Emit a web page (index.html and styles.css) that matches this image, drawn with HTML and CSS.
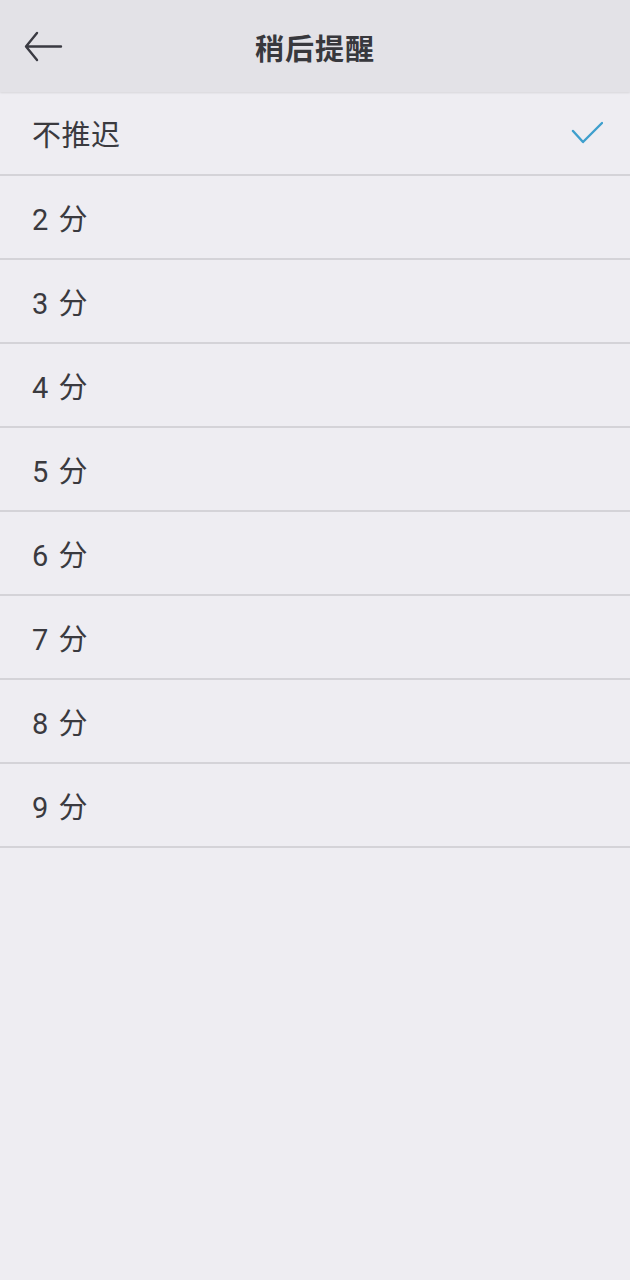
FILE: index.html
```html
<!DOCTYPE html>
<html lang="zh">
<head>
<meta charset="utf-8">
<link rel="stylesheet" href="styles.css">
</head>
<body>
<div class="app">
  <header class="bar">
    <svg class="back" width="40" height="32" viewBox="0 0 40 32">
      <path d="M37 15.5H3M13 2L2 15.5L13 29" fill="none" stroke="#3a3a42" stroke-width="2.4" stroke-linecap="round" stroke-linejoin="round"/>
    </svg>
    <h1 class="title">稍后提醒</h1>
  </header>
  <ul class="list">
    <li class="row"><span>不推迟</span>
      <svg class="check" width="32" height="24" viewBox="0 0 32 24"><path d="M2 10L12 21L31 2" fill="none" stroke="#3e9fcd" stroke-width="2.4" stroke-linecap="round" stroke-linejoin="round"/></svg>
    </li>
    <li class="row"><span>2 分</span></li>
    <li class="row"><span>3 分</span></li>
    <li class="row"><span>4 分</span></li>
    <li class="row"><span>5 分</span></li>
    <li class="row"><span>6 分</span></li>
    <li class="row"><span>7 分</span></li>
    <li class="row"><span>8 分</span></li>
    <li class="row"><span>9 分</span></li>
  </ul>
</div>
</body>
</html>
```

FILE: styles.css
```css
html, body {
  margin: 0;
  padding: 0;
  background: #eeedf2;
}
body {
  font-family: Roboto, "Noto Sans CJK SC", sans-serif;
  color: #3a3a3f;
}
.app {
  width: 630px;
  min-height: 1280px;
  background: #eeedf2;
}
.bar {
  height: 92px;
  background: #e3e2e7;
  display: flex;
  align-items: center;
  justify-content: center;
  position: relative;
  box-shadow: 0 1px 2px rgba(0,0,0,0.10);
}
.back {
  position: absolute;
  left: 24px;
  top: 31px;
}
.title {
  margin: 0;
  font-size: 29px;
  font-weight: 700;
  color: #38383d;
  letter-spacing: 1px;
  padding-top: 2px;
}
.list {
  list-style: none;
  margin: 0;
  padding: 0;
}
.row {
  height: 82px;
  border-bottom: 2px solid #d4d3d8;
  display: flex;
  align-items: center;
  justify-content: space-between;
  padding: 0 27px 0 32px;
  font-size: 29px;
  letter-spacing: 0.5px;
  word-spacing: 2px;
}
.row span {
  margin-top: 0;
}
.check {
  margin-top: 0;
}
```
